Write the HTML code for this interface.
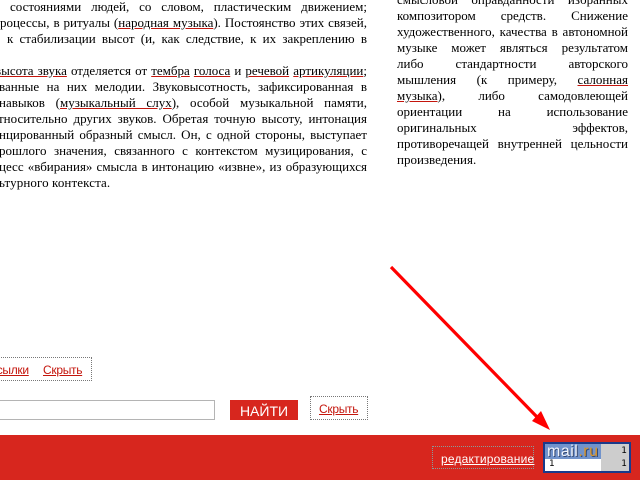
<!DOCTYPE html>
<html>
<head>
<meta charset="utf-8">
<style>
html,body{margin:0;padding:0;background:#fff;}
body{width:640px;height:480px;overflow:hidden;position:relative;}
.l{position:absolute;height:16px;line-height:16px;font:13px/16px "Liberation Serif",serif;color:#000;white-space:nowrap;text-align:justify;text-align-last:justify;}
.n{text-align:left;text-align-last:left;}
.l a{color:#000;text-decoration:underline;text-decoration-color:#c4150c;}
.s{position:absolute;font:12px/15px "Liberation Sans",sans-serif;color:#c4150c;text-decoration:underline;white-space:nowrap;letter-spacing:-.3px;}
.d{position:absolute;border:1px dotted #777;box-sizing:border-box;}
</style>
</head>
<body>
<div class="l" style="left:10px;width:357px;top:-1px">состояниями людей, со словом, пластическим движением;</div>
<div class="l" style="left:-7px;width:374px;top:15px">процессы, в ритуалы (<a>народная музыка</a>). Постоянство этих связей,</div>
<div class="l" style="left:7px;width:360px;top:31px">к стабилизации высот (и, как следствие, к их закреплению в</div>
<div class="l" style="left:-5px;width:372px;top:63px"><a>высота звука</a> отделяется от <a>тембра</a> <a>голоса</a> и <a>речевой</a> <a>артикуляции</a>;</div>
<div class="l" style="left:-1px;width:368px;top:79px">ванные на них мелодии. Звуковысотность, зафиксированная в</div>
<div class="l" style="left:-1px;width:368px;top:95px">навыков (<a>музыкальный слух</a>), особой музыкальной памяти,</div>
<div class="l" style="left:-2px;width:369px;top:111px">тносительно других звуков. Обретая точную высоту, интонация</div>
<div class="l" style="left:-1px;width:368px;top:127px">нцированный образный смысл. Он, с одной стороны, выступает</div>
<div class="l" style="left:-1px;width:368px;top:143px">рошлого значения, связанного с контекстом музицирования, с</div>
<div class="l" style="left:-1px;width:368px;top:159px">цесс «вбирания» смысла в интонацию «извне», из образующихся</div>
<div class="l n" style="left:-1px;top:175px;letter-spacing:.1px">ьтурного контекста.</div>

<div class="l" style="left:397px;width:231px;top:-8px">смысловой оправданности избранных</div>
<div class="l" style="left:397px;width:231px;top:8px">композитором средств. Снижение</div>
<div class="l" style="left:397px;width:231px;top:24px">художественного, качества в автономной</div>
<div class="l" style="left:397px;width:231px;top:40px">музыке может являться результатом</div>
<div class="l" style="left:397px;width:231px;top:56px">либо стандартности авторского</div>
<div class="l" style="left:397px;width:231px;top:72px">мышления (к примеру, <a>салонная</a></div>
<div class="l" style="left:397px;width:231px;top:88px"><a>музыка</a>), либо самодовлеющей</div>
<div class="l" style="left:397px;width:231px;top:104px">ориентации на использование</div>
<div class="l" style="left:397px;width:231px;top:120px">оригинальных эффектов,</div>
<div class="l" style="left:397px;width:231px;top:136px">противоречащей внутренней цельности</div>
<div class="l n" style="left:397px;top:152px">произведения.</div>

<div class="d" style="left:-10px;top:357px;width:102px;height:24px"></div>
<div class="s" style="left:-9px;top:363px">ссылки</div>
<div class="s" style="left:43px;top:363px">Скрыть</div>

<div style="position:absolute;left:-5px;top:400px;width:220px;height:20px;box-sizing:border-box;border:1px solid #b4b4b4;background:#fff"></div>
<div style="position:absolute;left:230px;top:400px;width:68px;height:20px;background:#d7261e;color:#fff;font:14px/22px 'Liberation Sans',sans-serif;text-align:center">НАЙТИ</div>
<div class="d" style="left:310px;top:396px;width:58px;height:24px"></div>
<div class="s" style="left:319px;top:402px">Скрыть</div>

<div style="position:absolute;left:0;top:435px;width:640px;height:45px;background:#d7261e"></div>
<div class="d" style="left:432px;top:446px;width:102px;height:23px;border-color:#8a9a9a"></div>
<div class="s" style="left:441px;top:452px;color:#fff;letter-spacing:.2px">редактирование</div>

<div style="position:absolute;left:543px;top:442px;width:88px;height:31px;box-sizing:border-box;border:1px solid #1a3a8a;box-shadow:inset 0 0 0 1px #1a3a8a;background:#fff">
  <div style="position:absolute;left:1px;top:1px;width:56px;height:15px;background:#7193cb;overflow:hidden;font:16px/15px 'Liberation Sans',sans-serif;color:#f0f4fb;text-indent:2px;letter-spacing:.5px;text-shadow:1px 1px 0 #33466e">mail<span style="color:#d9962a">.ru</span></div>
  <div style="position:absolute;left:57px;top:1px;width:28px;height:27px;background:#cdcdcd"></div>
  <div style="position:absolute;left:1px;top:16px;width:56px;height:12px;background:#fff"></div>
  <div style="position:absolute;right:3px;top:2px;font:9px/12px 'DejaVu Sans',sans-serif;color:#000">1</div>
  <div style="position:absolute;right:3px;top:15px;font:9px/12px 'DejaVu Sans',sans-serif;color:#000">1</div>
  <div style="position:absolute;left:5px;top:15px;font:9px/12px 'DejaVu Sans',sans-serif;color:#000">1</div>
</div>

<svg style="position:absolute;left:0;top:0" width="640" height="480">
  <line x1="391" y1="267" x2="538" y2="418" stroke="#ff0000" stroke-width="3.2"/>
  <path d="M550 430 L532 421 L541 411 Z" fill="#ff0000"/>
</svg>
</body>
</html>
